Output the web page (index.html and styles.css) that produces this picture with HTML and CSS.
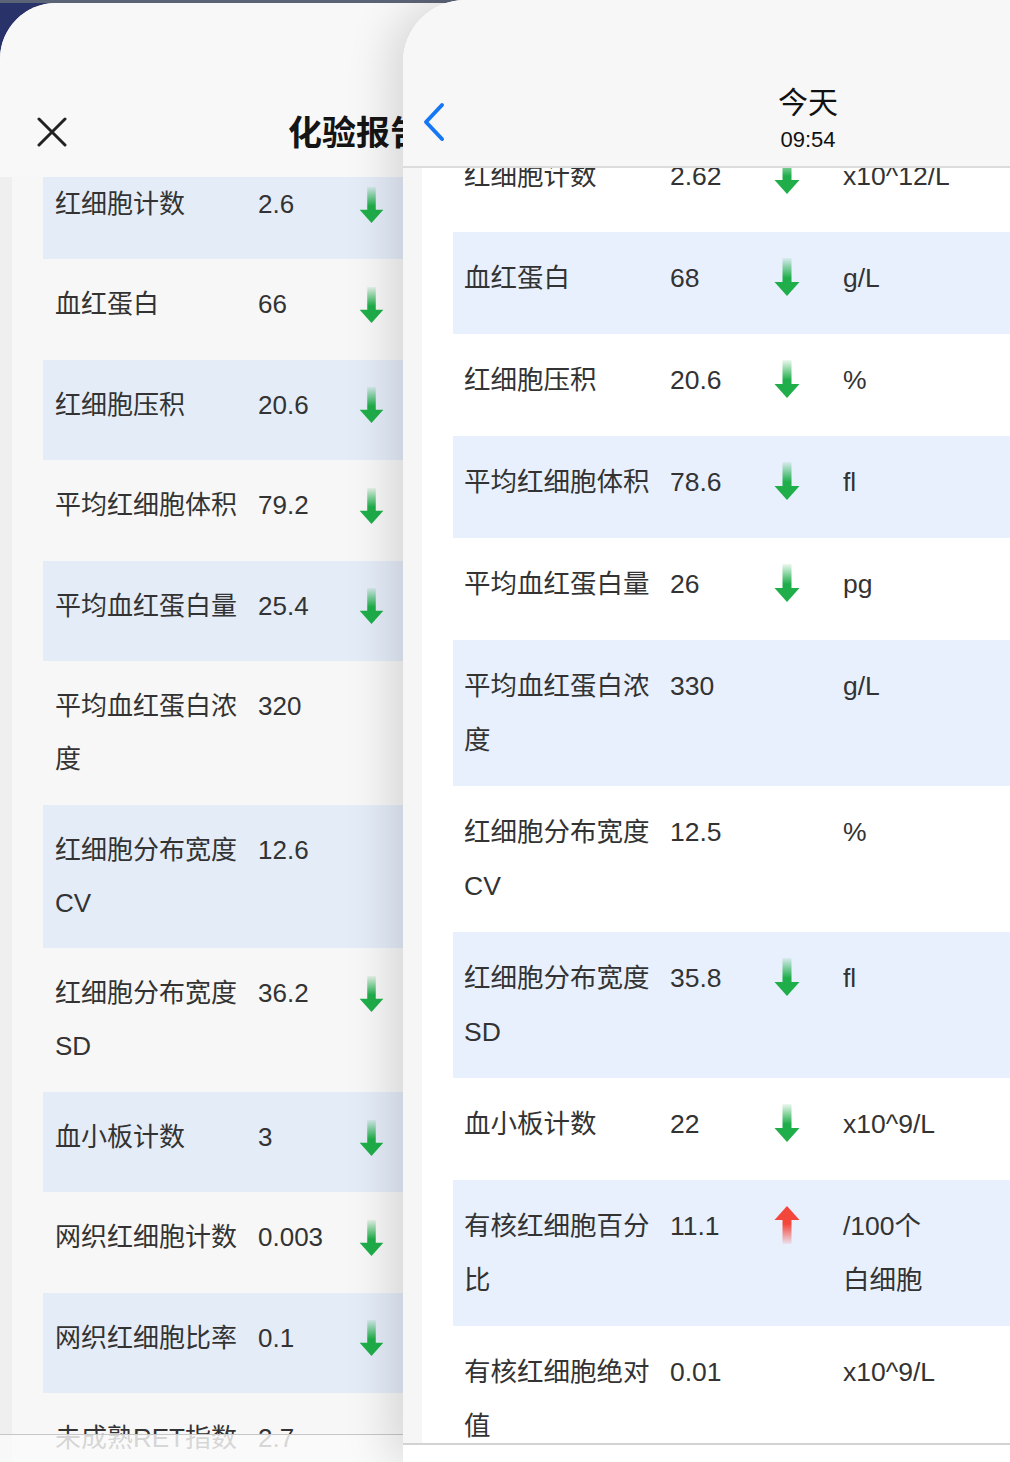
FILE: index.html
```html
<!DOCTYPE html>
<html lang="zh-CN">
<head>
  <meta charset="UTF-8">
  <meta name="viewport" content="width=device-width, initial-scale=1">
  <title>化验报告</title>
  <link rel="stylesheet" href="styles.css">
</head>
<body>
  <svg class="defs" width="0" height="0" aria-hidden="true">
    <defs>
      <linearGradient id="fadeDown" x1="0" y1="0" x2="0" y2="1">
        <stop offset="0" stop-color="#1fae4a" stop-opacity="0.08"/>
        <stop offset="0.8" stop-color="#1fae4a" stop-opacity="1"/>
      </linearGradient>
      <linearGradient id="fadeUp" x1="0" y1="0" x2="0" y2="1">
        <stop offset="0.2" stop-color="#f4473c" stop-opacity="1"/>
        <stop offset="1" stop-color="#f4473c" stop-opacity="0.08"/>
      </linearGradient>
    </defs>
  </svg>

  <div class="stage">
    <!-- sheet behind -->
    <section class="sheet sheet-back">
      <header class="nav nav-back">
        <div class="nav-left">
          <svg class="icon-close" viewBox="0 0 30 30" width="30" height="30">
            <path d="M2 2 L28 28 M28 2 L2 28" stroke="#222" stroke-width="3" stroke-linecap="round" fill="none"/>
          </svg>
        </div>
        <h1 class="nav-title">化验报告</h1>
        <div></div>
      </header>
      <div class="page page-back">
        <div class="list list-back" id="listBack"></div>
      </div>
      <div class="tabbar-back"></div>
    </section>

    <!-- sheet in front -->
    <section class="sheet sheet-front">
      <header class="nav nav-front">
        <div class="nav-left">
          <svg class="icon-back" viewBox="0 0 24 40" width="24" height="40">
            <path d="M20 3 L4 20 L20 37" stroke="#1677f5" stroke-width="4" stroke-linecap="round" stroke-linejoin="round" fill="none"/>
          </svg>
        </div>
        <div class="nav-center">
          <div class="nav-day">今天</div>
          <div class="nav-time">09:54</div>
        </div>
        <div></div>
      </header>
      <div class="page page-front">
        <div class="list list-front" id="listFront"></div>
      </div>
      <div class="tabbar-front"></div>
    </section>
  </div>

  <script>
    const hasilLama = [
      ["红细胞计数", "2.6", "down", "x10^12/L"],
      ["血红蛋白", "66", "down", "g/L"],
      ["红细胞压积", "20.6", "down", "%"],
      ["平均红细胞体积", "79.2", "down", "fl"],
      ["平均血红蛋白量", "25.4", "down", "pg"],
      ["平均血红蛋白浓度", "320", "", "g/L"],
      ["红细胞分布宽度CV", "12.6", "", "%"],
      ["红细胞分布宽度SD", "36.2", "down", "fl"],
      ["血小板计数", "3", "down", "x10^9/L"],
      ["网织红细胞计数", "0.003", "down", "x10^12/L"],
      ["网织红细胞比率", "0.1", "down", "%"],
      ["未成熟RET指数", "2.7", "", "%"]
    ];

    const hasilBaru = [
      ["红细胞计数", "2.62", "down", "x10^12/L"],
      ["血红蛋白", "68", "down", "g/L"],
      ["红细胞压积", "20.6", "down", "%"],
      ["平均红细胞体积", "78.6", "down", "fl"],
      ["平均血红蛋白量", "26", "down", "pg"],
      ["平均血红蛋白浓度", "330", "", "g/L"],
      ["红细胞分布宽度CV", "12.5", "", "%"],
      ["红细胞分布宽度SD", "35.8", "down", "fl"],
      ["血小板计数", "22", "down", "x10^9/L"],
      ["有核红细胞百分比", "11.1", "up", "/100个<br>白细胞"],
      ["有核红细胞绝对值", "0.01", "", "x10^9/L"]
    ];

    function panah(arah) {
      if (arah === "down") {
        return `<svg class="arrow" viewBox="0 0 26 38"><rect x="8.5" y="0" width="9" height="25" fill="url(#fadeDown)"/><polygon points="0.5,24 25.5,24 13,38" fill="#1fae4a"/></svg>`;
      }
      if (arah === "up") {
        return `<svg class="arrow" viewBox="0 0 26 38"><polygon points="13,0 0.5,14 25.5,14 " fill="#f4473c"/><rect x="8.5" y="13" width="9" height="25" fill="url(#fadeUp)"/></svg>`;
      }
      return "";
    }

    function tampilkan(id, data) {
      const list = document.getElementById(id);
      list.innerHTML = data.map(([nama, nilai, arah, satuan]) => `
        <div class="row">
          <div class="cell-name">${nama}</div>
          <div class="cell-value">${nilai}</div>
          <div class="cell-flag">${panah(arah)}</div>
          <div class="cell-unit">${satuan}</div>
        </div>
      `).join("");
    }

    tampilkan("listBack", hasilLama);
    tampilkan("listFront", hasilBaru);
  </script>
</body>
</html>
```

FILE: styles.css
```css
* {
  box-sizing: border-box;
}

body {
  margin: 0;
  width: 1010px;
  height: 1462px;
  overflow: hidden;
  font-family: "Liberation Sans", "Noto Sans CJK SC", sans-serif;
  color: #333333;
  background: linear-gradient(#5b6476 0 3px, #29336a 3px);
}

.defs {
  position: absolute;
}

.stage {
  display: grid;
  grid-template-columns: 403px 309px 501px;
  width: 1213px;
  height: 1462px;
}

.sheet {
  grid-row: 1;
  display: flex;
  flex-direction: column;
  overflow: hidden;
  position: relative;
}

.sheet-back {
  grid-column: 1 / 3;
  margin-top: 3px;
  border-radius: 56px 56px 0 0;
  background: #f7f7f7;
}

.sheet-front {
  grid-column: 2 / 4;
  z-index: 1;
  border-radius: 62px 62px 0 0;
  background: #ffffff;
  box-shadow: -14px 0 44px rgba(0, 0, 0, 0.13);
}

/* navigation bars */
.nav {
  display: grid;
  grid-template-columns: 1fr auto 1fr;
  align-items: start;
  flex-shrink: 0;
}

.nav-back {
  height: 174px;
  padding-top: 106px;
  background: #f8f8f8;
}

.nav-back .nav-left {
  padding-left: 37px;
}

.icon-close {
  display: block;
  margin-top: 8px;
}

.nav-title {
  margin: 0;
  font-family: "Noto Sans CJK SC", sans-serif;
  font-size: 34px;
  line-height: 44px;
  font-weight: 700;
  color: #151515;
}

.nav-front {
  height: 168px;
  padding-top: 86px;
  background: #f7f7f7;
  border-bottom: 2px solid #dcdcdc;
}

.nav-front .nav-left {
  padding-left: 19px;
}

.icon-back {
  display: block;
  margin-top: 16px;
}

.nav-center {
  text-align: center;
  color: #111111;
}

.nav-day {
  font-size: 30px;
  line-height: 34px;
}

.nav-time {
  margin-top: 6px;
  font-size: 22px;
  line-height: 28px;
}

/* page content */
.page {
  flex: 1;
  overflow: hidden;
}

.page-back {
  border-left: 12px solid #efeff0;
  padding-left: 31px;
  background: #f7f7f7;
}

.page-front {
  border-left: 19px solid #f6f6f6;
  padding-left: 31px;
  background: #ffffff;
}

.list-back {
  margin-top: -18px;
}

.list-front {
  margin-top: -38px;
}

.row {
  display: grid;
  align-items: start;
}

.list-back .row {
  grid-template-columns: 203px 101px 69px 1fr;
  min-height: 100.4px;
  padding: 19px 12px 18.7px;
  font-size: 26px;
  line-height: 53px;
}

.list-front .row {
  grid-template-columns: 206px 104px 69px 1fr;
  min-height: 102px;
  padding: 19px 11px 19px;
  font-size: 26.5px;
  line-height: 54px;
}

.list-back .row:nth-child(odd) {
  background: #e4ecf8;
}

.list-front .row:nth-child(even) {
  background: #e8f0fd;
}

.cell-flag {
  display: flex;
  align-items: center;
  height: 54px;
  margin-top: -1px;
}

.list-back .cell-flag {
  height: 55px;
}

.arrow {
  width: 26px;
  height: 38px;
  display: block;
}

.list-back .arrow {
  width: 25px;
  height: 36px;
}

.cell-unit {
  white-space: nowrap;
}

/* bottom bars */
.tabbar-back {
  position: absolute;
  left: 0;
  right: 0;
  bottom: 0;
  height: 28px;
  border-top: 1px solid #c6c6c6;
  background: rgba(250, 250, 250, 0.82);
}

.tabbar-front {
  flex-shrink: 0;
  height: 19px;
  border-top: 2px solid #d3d3d3;
  background: #ffffff;
}
```
